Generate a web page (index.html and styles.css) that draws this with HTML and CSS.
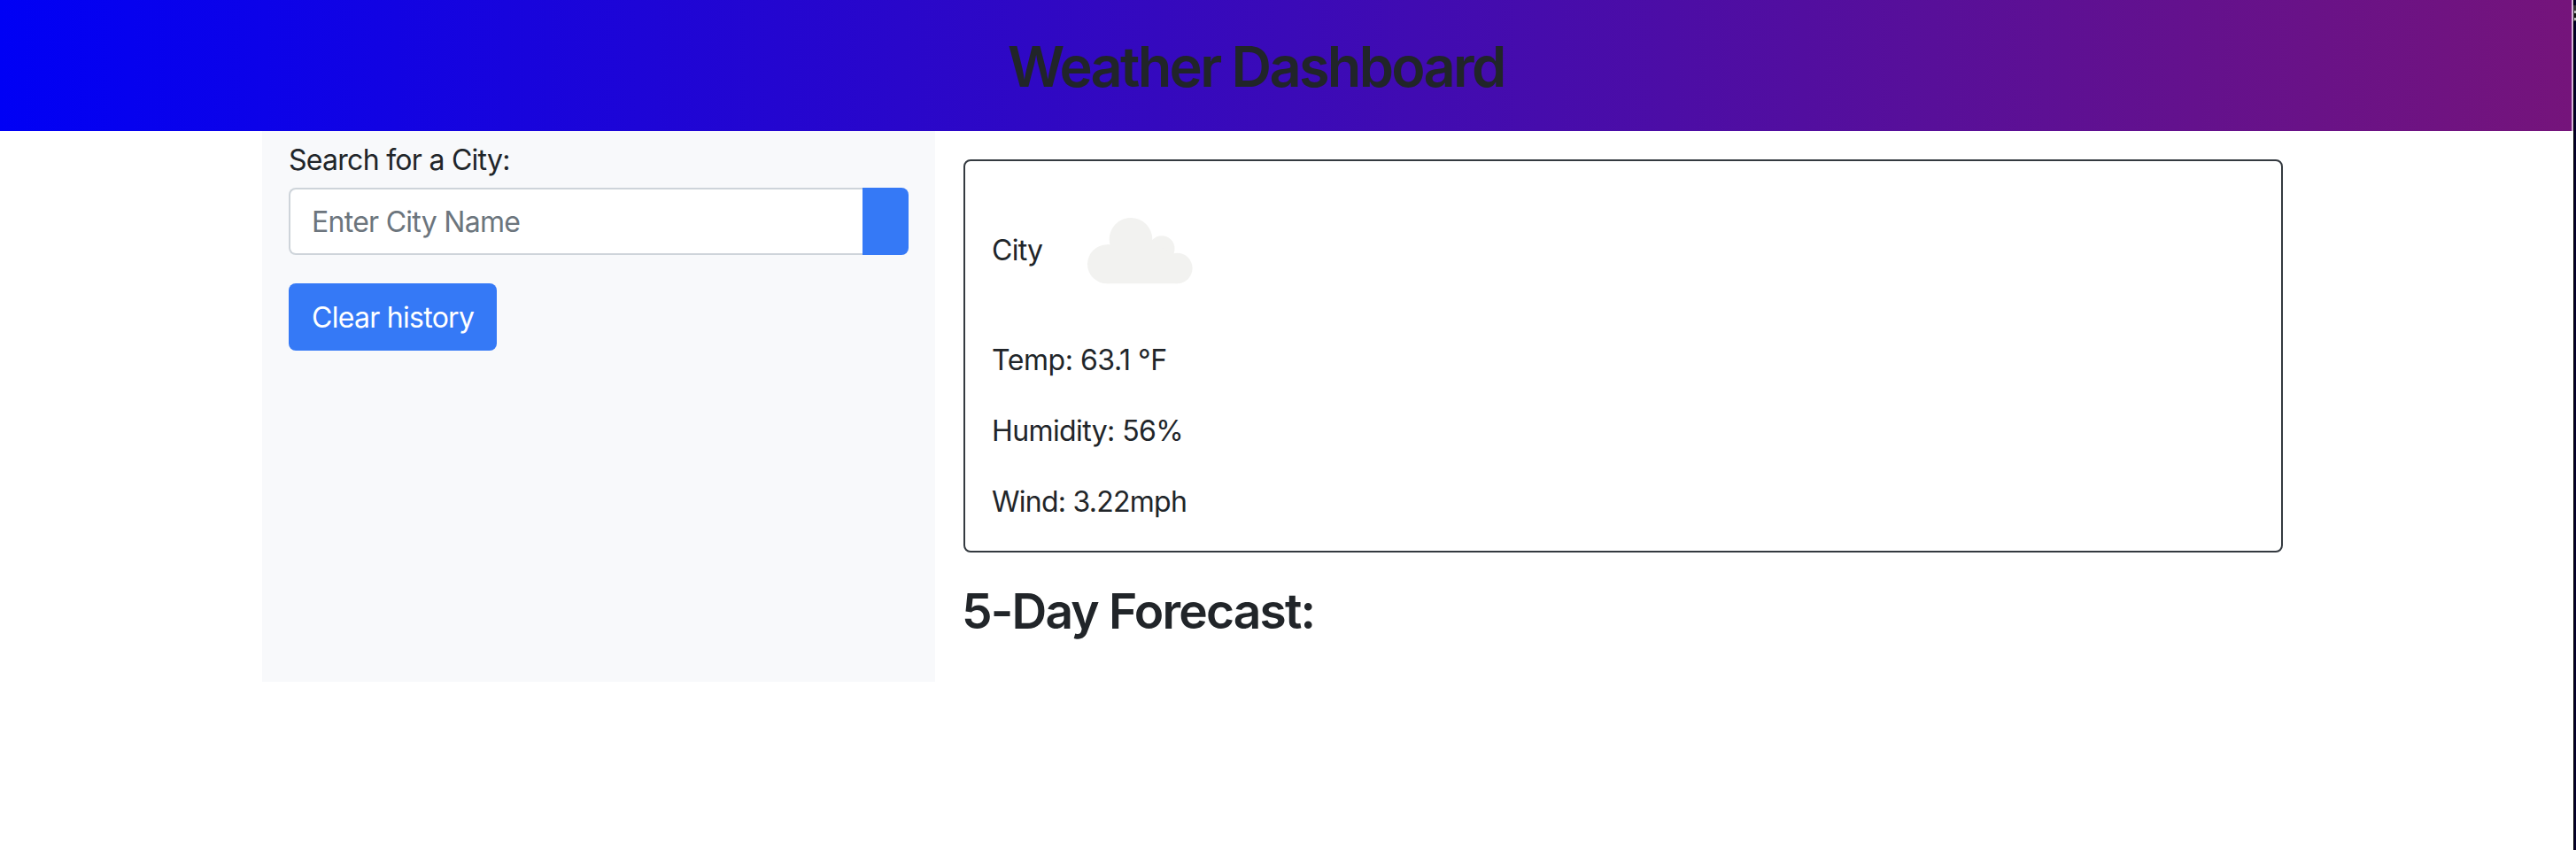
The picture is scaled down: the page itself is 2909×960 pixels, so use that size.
FILE: index.html
```html
<!DOCTYPE html>
<html lang="en">
<head>
<meta charset="utf-8">
<title>Weather Dashboard</title>
<link rel="stylesheet" href="styles.css">
</head>
<body>
<div class="page">
  <header class="header"><h1 class="title">Weather Dashboard</h1></header>
  <main class="container">
    <aside class="sidebar">
      <label class="label" for="city">Search for a City:</label>
      <div class="search">
        <input class="field" id="city" type="text" placeholder="Enter City Name">
        <button class="search-button" type="button" aria-label="Search"></button>
      </div>
      <button class="clear" type="button">Clear history</button>
    </aside>
    <section class="content">
      <div class="card">
        <div class="city"><span class="name">City</span>
          <svg class="cloud" viewBox="0 0 119 75" width="119" height="75" fill="#f2f2f0" aria-hidden="true">
            <circle cx="22" cy="52.300" r="22"/>
            <circle cx="49" cy="24.300" r="24.300"/>
            <circle cx="84" cy="34.700" r="14.500"/>
            <circle cx="101.300" cy="57" r="17.300"/>
            <path d="M22 30.300H40L73 22V34H84L98 40H101.300V74.300H22Z"/>
          </svg>
        </div>
        <p class="stat temp">Temp: 63.1 °F</p>
        <p class="stat humidity">Humidity: 56%</p>
        <p class="stat wind">Wind: 3.22mph</p>
      </div>
      <h2 class="forecast">5-Day Forecast:</h2>
    </section>
  </main>
</div>
<div class="edge"><i class="edge-mark"></i></div>
</body>
</html>
```
FILE: styles.css
```css
* { box-sizing: border-box; }
body {
  display: flex;
  margin: 0;
  height: 960px;
  color: #212529;
  font: 400 32px/48px Inter, "Liberation Sans", sans-serif;
  letter-spacing: -0.72px;
}
.page { flex: 1; height: 960px; background: #fff; }
.edge { width: 3px; padding-top: 6px; background: linear-gradient(90deg, #000 0 1px, #05002b 1px); }
.edge-mark { display: block; height: 18px; border: solid #333; border-width: 6px 0 1px 1px; background: linear-gradient(#bbb 0 3px, #111 3px 8px, #bbb 8px); }
.header {
  height: 148px;
  padding-left: 1138px;
  border-right: 2px solid #d9b5dc;
  background: linear-gradient(90deg, #0000f5, #75147b) padding-box;
}
.title { margin: 0; padding-top: 37px; font-size: 63px; line-height: 77px; font-weight: 600; letter-spacing: -2.7px; white-space: nowrap; }
.container { display: flex; width: 2280px; margin-left: 296px; }
.sidebar { width: 760px; height: 622px; padding: 9px 30px 0; background: #f8f9fb; }
.label { display: block; height: 55px; }
.search { display: flex; height: 76px; margin-bottom: 32px; }
.field {
  width: 648px;
  padding: 2px 24px 0;
  border: 2px solid #ced4da;
  border-right: 0;
  border-radius: 8px 0 0 8px;
  background: #fff;
  font: inherit;
  letter-spacing: inherit;
}
.field::placeholder { color: #6c757d; opacity: 1; }
.search-button { width: 52px; padding: 0; border: 0; border-radius: 0 8px 8px 0; background: #3579f6; }
.clear { width: 235px; height: 76px; padding: 2px 0 0 26px; border: 0; border-radius: 8px; background: #3579f6; color: #fff; font: inherit; letter-spacing: inherit; text-align: left; white-space: nowrap; }
.content { flex: 1; padding: 32px 0 0 32px; }
.card { width: 1490px; height: 444px; padding: 54px 30px 0; border: 2px solid #343a40; border-radius: 8px; }
.city { display: flex; height: 147px; }
.name { width: 108px; padding-top: 23px; }
.cloud { margin-top: 10px; }
.stat { margin: 0 0 32px; }
.temp { letter-spacing: -0.45px; }
.humidity { letter-spacing: -0.6px; }
.wind { letter-spacing: -0.75px; }
.forecast { margin: 30px 0 0 -2px; font-size: 55px; line-height: 72px; font-weight: 600; letter-spacing: -1.8px; white-space: nowrap; }
```
